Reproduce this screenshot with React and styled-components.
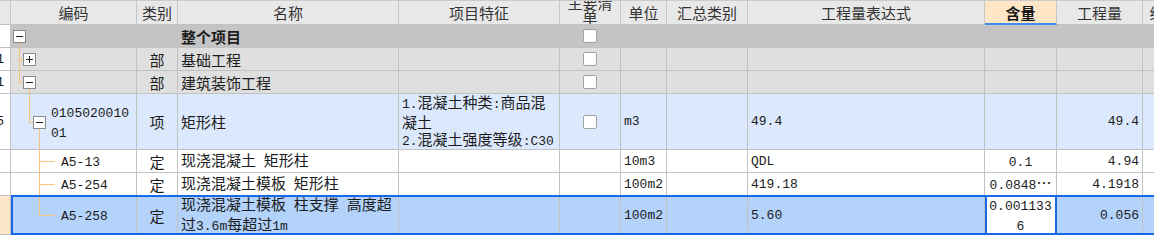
import React from 'react'
import styled, { createGlobalStyle } from 'styled-components'

const GlobalStyle = createGlobalStyle`
  html, body {
    margin: 0;
    padding: 0;
    background: #fff;
  }
  body {
    font-family: "Noto Sans CJK SC", "Liberation Sans", sans-serif;
  }
`

// column widths include each cell's 1px right rule
const COLS = '31px 126px 41px 221px 161px 61px 46px 81px 237px 72px 86px 74px'
const RULE = '#c2c2c2'
const GUIDE = '#f8c47c'
const BLUE = '#1769e8'

const ROW_BG = {
    root: '#c4c4c4',
    part: '#dfdfdf',
    item: '#dce9fc',
    quota: '#ffffff',
    selected: '#b3d3fb',
}

const Viewport = styled.div`
    width: 1154px;
    height: 241px;
    overflow: hidden;
    background: #fff;
`

const Sheet = styled.div`
    display: flex;
    flex-direction: column;
    width: max-content;
    margin-left: -20px;
    color: #1c1c1c;
    font-size: 15px;
`

const HeaderRow = styled.div`
    display: grid;
    grid-template-columns: ${COLS};
    height: 25px;
    box-sizing: border-box;
    border-top: 1px solid #cbcbcb;
    background: #e8e8e8;
`

const HeaderCell = styled.div`
    display: flex;
    align-items: ${props => props.$wrap ? 'flex-end' : 'center'};
    justify-content: center;
    box-sizing: border-box;
    padding: 0 3px;
    overflow: hidden;
    text-align: center;
    line-height: ${props => props.$wrap ? '14px' : '17px'};
    color: ${props => props.$active ? '#1a1a1a' : '#333'};
    font-weight: ${props => props.$active ? 'bold' : 'normal'};
    background: ${props => props.$active ? '#fee6c7' : 'transparent'};
    border-right: 1px solid #c6c6c6;
    border-bottom: ${props => props.$active ? '2px solid #3c8ef0' : `1px solid ${RULE}`};
`

const Row = styled.div`
    position: relative;
    display: grid;
    grid-template-columns: ${COLS};
    height: ${props => props.$h}px;
    background: ${props => ROW_BG[props.$kind]};

    &::after {
        content: "";
        display: ${props => props.$kind === 'selected' ? 'block' : 'none'};
        position: absolute;
        left: 31px;
        right: 0;
        top: -1px;
        bottom: 0;
        border: 2px solid ${BLUE};
        pointer-events: none;
    }
`

const Cell = styled.div`
    display: flex;
    align-items: center;
    justify-content: ${props => props.$align === 'center' ? 'center' : props.$align === 'right' ? 'flex-end' : 'flex-start'};
    box-sizing: border-box;
    min-width: 0;
    padding: 0 3px;
    overflow: hidden;
    line-height: 17px;
    text-align: ${props => props.$align || 'left'};
    word-break: break-all;
    font-weight: ${props => props.$bold ? 'bold' : 'normal'};
    border-right: 1px solid ${props => props.$active ? BLUE : RULE};
    border-bottom: 1px solid ${RULE};
    background: ${props => props.$active ? '#fff' : 'transparent'};
    box-shadow: ${props => props.$active ? `inset 2px 0 0 ${BLUE}, inset -1px 0 0 ${BLUE}` : 'none'};
`

const NumCell = styled(Cell)`
    justify-content: flex-end;
    padding: 0 6px 0 0;
    background: ${props => props.$selected ? '#fde6c9' : '#fff'};
`

const CodeCell = styled(Cell)`
    padding: 0;
`

const CodeText = styled.div`
    flex: 1;
    min-width: 0;
    padding-right: 3px;
    word-break: break-all;
`

const GuideBox = styled.div`
    flex: none;
    align-self: stretch;
    width: ${props => props.$w}px;

    svg {
        display: block;
        width: 100%;
        height: 100%;
    }
`

const Lines = styled.div`
    display: flex;
    flex-direction: column;
`

const Mono = styled.span`
    font-family: "Liberation Mono", monospace;
    font-size: 13px;
`

const Check = styled.span`
    display: block;
    width: 14px;
    height: 14px;
    box-sizing: border-box;
    border: 1px solid #a2a2a2;
    border-radius: 2px;
    background: #fff;
`

// ascii runs are drawn half-width, the way the sheet renders them
const txt = s => s.split(/([\x20-\x7e]+)/).filter(Boolean).map((part, i) =>
    /^[\x20-\x7e]+$/.test(part) ? <Mono key={i}>{part}</Mono> : <React.Fragment key={i}>{part}</React.Fragment>
)

const V = ({ x, y = '0', h = '100%' }) => <rect x={x} y={y} width="1" height={h} fill={GUIDE} />
const H = ({ x1, x2 }) => <rect x={x1} y="50%" width={x2 - x1} height="1" fill={GUIDE} />

const Toggle = ({ x, open }) => (
    <g>
        <rect x={x + 0.5} y="50%" width="12" height="12" transform="translate(0,-5.5)" fill="#fff" stroke="#8a8a8a" />
        <rect x={x + 3} y="50%" width="7" height="1" fill="#202020" />
        {!open && <rect x={x + 6} y="50%" width="1" height="7" transform="translate(0,-3)" fill="#202020" />}
    </g>
)

const GUIDES = {
    root: { w: 16, draw: <><V x={8} y="50%" h="50%" /><Toggle x={2} open /></> },
    part: { w: 26, draw: <><V x={8} /><H x1={8} x2={12} /><Toggle x={12} /></> },
    partLast: { w: 26, draw: <><V x={8} h="50%" /><H x1={8} x2={12} /><V x={18} y="50%" h="50%" /><Toggle x={12} open /></> },
    item: { w: 40, draw: <><V x={18} h="50%" /><H x1={18} x2={22} /><V x={28} y="50%" h="50%" /><Toggle x={22} open /></> },
    mid: { w: 50, draw: <><V x={28} /><H x1={28} x2={44} /></> },
    last: { w: 50, draw: <><V x={28} h="50%" /><H x1={28} x2={44} /></> },
}

const Guide = ({ type }) => (
    <GuideBox $w={GUIDES[type].w}>
        <svg shapeRendering="crispEdges">{GUIDES[type].draw}</svg>
    </GuideBox>
)

const headers = ['', '编码', '类别', '名称', '项目特征', '主要清单', '单位', '汇总类别', '工程量表达式', '含量', '工程量', '综合单价']

const rows = [
    { kind: 'root', h: 23, guide: 'root', name: '整个项目', bold: true, check: true },
    { kind: 'part', h: 23, no: '1', guide: 'part', type: '部', name: '基础工程', check: true },
    { kind: 'part', h: 23, no: '1', guide: 'partLast', type: '部', name: '建筑装饰工程', check: true },
    {
        kind: 'item', h: 56, no: '5', guide: 'item', code: '010502001001', type: '项', name: '矩形柱',
        feature: ['1.混凝土种类:商品混凝土', '2.混凝土强度等级:C30'], check: true, unit: 'm3', expr: '49.4', qty: '49.4',
    },
    { kind: 'quota', h: 23, guide: 'mid', code: 'A5-13', type: '定', name: '现浇混凝土 矩形柱', unit: '10m3', expr: 'QDL', ratio: '0.1', qty: '4.94' },
    { kind: 'quota', h: 23, guide: 'mid', code: 'A5-254', type: '定', name: '现浇混凝土模板 矩形柱', unit: '100m2', expr: '419.18', ratio: '0.0848…', qty: '4.1918' },
    {
        kind: 'selected', h: 39, guide: 'last', code: 'A5-258', type: '定', name: '现浇混凝土模板 柱支撑 高度超过3.6m每超过1m',
        unit: '100m2', expr: '5.60', ratio: '0.0011336', qty: '0.056',
    },
]

const App = () => {
    return (
        <Viewport>
            <GlobalStyle />
            <Sheet>
                <HeaderRow>
                    {headers.map((h, i) => (
                        <HeaderCell key={i} $active={h === '含量'} $wrap={h === '主要清单'}>{h}</HeaderCell>
                    ))}
                </HeaderRow>
                {rows.map((r, i) => {
                    const selected = r.kind === 'selected'
                    return (
                        <Row key={i} $h={r.h} $kind={r.kind}>
                            <NumCell $selected={selected}>{r.no && <Mono>{r.no}</Mono>}</NumCell>
                            <CodeCell>
                                <Guide type={r.guide} />
                                {r.code && <CodeText>{txt(r.code)}</CodeText>}
                            </CodeCell>
                            <Cell $align="center">{r.type}</Cell>
                            <Cell $bold={r.bold}>{r.name && <div>{txt(r.name)}</div>}</Cell>
                            <Cell>
                                {r.feature && (
                                    <Lines>
                                        {r.feature.map((f, j) => <div key={j}>{txt(f)}</div>)}
                                    </Lines>
                                )}
                            </Cell>
                            <Cell $align="center">{r.check && <Check />}</Cell>
                            <Cell>{r.unit && txt(r.unit)}</Cell>
                            <Cell />
                            <Cell>{r.expr && txt(r.expr)}</Cell>
                            <Cell $align="center" $active={selected}>{r.ratio && <div>{txt(r.ratio)}</div>}</Cell>
                            <Cell $align="right">{r.qty && txt(r.qty)}</Cell>
                            <Cell />
                        </Row>
                    )
                })}
            </Sheet>
        </Viewport>
    )
}

export default App
